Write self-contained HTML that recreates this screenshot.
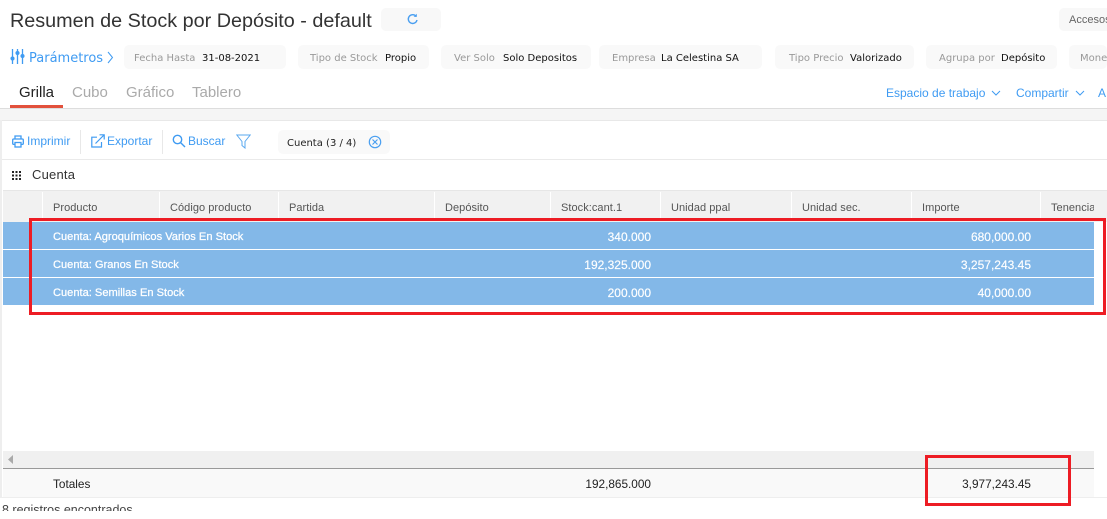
<!DOCTYPE html>
<html lang="es"><head><meta charset="utf-8"><title>Resumen de Stock</title>
<style>
html,body{margin:0;padding:0;background:#fff;overflow:hidden}
#p{position:relative;width:1107px;height:519px;overflow:hidden;background:#fff;font-family:"Liberation Sans",sans-serif}
#p div,#p svg{position:absolute}
.t{white-space:nowrap}
.chip{top:45px;height:24px;background:#f9f9f9;border-radius:5px}
.cl{top:52px;font:10px/14px "DejaVu Sans",sans-serif;white-space:nowrap;color:#999}
.cv{top:52px;font:10px/14px "DejaVu Sans",sans-serif;white-space:nowrap;color:#111}
.tab{top:84px;font-size:15px;line-height:18px;color:#aaa;white-space:nowrap}
.blue{color:#3f9bf2}
.h{top:201px;font-size:11px;line-height:14px;color:#555;white-space:nowrap;letter-spacing:.05px}
.sep{top:192px;width:1px;height:29px;background:#fff}
.row{left:3px;width:1091px;height:27px;background:#83b8e8}
.w{color:#fff;font-size:12px;line-height:14px;white-space:nowrap;-webkit-text-stroke:.15px #fff}
.wb{color:#fff;line-height:14px;white-space:nowrap;font-size:11.1px;-webkit-text-stroke:.25px #fff}
.r{text-align:right}
.red{background:#ed1c24}
.tot{font-size:11.8px;line-height:14px;color:#222;top:477px}
</style></head><body><div id="p">
<div class="t" style="left:10px;top:8px;font-size:19.8px;line-height:26px;color:#333">Resumen de Stock por Depósito - default</div>
<div style="left:381px;top:8px;width:60px;height:23px;background:#f8f8f8;border-radius:5px"></div>
<svg style="left:406px;top:13px" width="13" height="13" viewBox="0 0 13 13"><path d="M10.2 3.4A4.4 4.4 0 1 0 11 7" fill="none" stroke="#4a9ff0" stroke-width="1.4"/><path d="M7.600 3.900h3.200V.8z" fill="#4a9ff0"/></svg>
<div style="left:1059px;top:8px;width:48px;height:23px;background:#f8f8f8;border-radius:5px 0 0 5px"></div>
<div class="t" style="left:1069px;top:13px;font-size:11px;line-height:14px;color:#666">Accesos</div>

<svg style="left:10px;top:48px" width="15" height="17" viewBox="0 0 15 17"><g stroke="#3f9bf2" stroke-width="1.3" fill="#3f9bf2"><path d="M2.500 1v15M7.500 1v15M12.500 1v15" fill="none"/><circle cx="2.500" cy="10.500" r="1.400"/><circle cx="7.500" cy="5" r="1.400"/><circle cx="12.500" cy="8" r="1.400"/></g></svg>
<div class="t blue" style="left:29px;top:51px;font:13px/15px 'DejaVu Sans',sans-serif">Parámetros</div>
<svg style="left:107px;top:51px" width="7" height="13" viewBox="0 0 7 13"><path d="M1 1l4.500 5.500L1 12" fill="none" stroke="#3f9bf2" stroke-width="1"/></svg>

<div class="chip" style="left:124px;width:162px"></div><div class="cl" style="left:134px">Fecha Hasta</div><div class="cv" style="left:202px">31-08-2021</div>
<div class="chip" style="left:298px;width:131px"></div><div class="cl" style="left:310px">Tipo de Stock</div><div class="cv" style="left:385px">Propio</div>
<div class="chip" style="left:441px;width:150px"></div><div class="cl" style="left:454px">Ver Solo</div><div class="cv" style="left:503px">Solo Depositos</div>
<div class="chip" style="left:599px;width:163px"></div>
<div class="cl" style="left:612px">Empresa</div><div class="cv" style="left:661px">La Celestina SA</div>
<div class="chip" style="left:775px;width:139px"></div><div class="cl" style="left:789px">Tipo Precio</div><div class="cv" style="left:850px">Valorizado</div>
<div class="chip" style="left:926px;width:131px"></div><div class="cl" style="left:939px">Agrupa por</div><div class="cv" style="left:1001px">Depósito</div>
<div class="chip" style="left:1069px;width:38px"></div><div class="cl" style="left:1080px">Mone</div>

<div class="tab" style="left:19px;color:#222">Grilla</div>
<div class="tab" style="left:72px">Cubo</div>
<div class="tab" style="left:126px">Gráfico</div>
<div class="tab" style="left:192px">Tablero</div>
<div style="left:10px;top:105px;width:53px;height:3px;background:#e2513c"></div>
<div class="t blue" style="left:886px;top:86px;font-size:12px;line-height:14px">Espacio de trabajo</div>
<svg style="left:991px;top:90px" width="10" height="7" viewBox="0 0 10 7"><path d="M1 1l4 4 4-4" fill="none" stroke="#3f9bf2"/></svg>
<div class="t blue" style="left:1016px;top:86px;font-size:12px;line-height:14px">Compartir</div>
<svg style="left:1075px;top:90px" width="10" height="7" viewBox="0 0 10 7"><path d="M1 1l4 4 4-4" fill="none" stroke="#3f9bf2"/></svg>
<div class="t blue" style="left:1098px;top:86px;font-size:12px;line-height:14px">A</div>

<div style="left:0;top:108px;width:1107px;height:1px;background:#ddd"></div>
<div style="left:0;top:109px;width:1107px;height:11px;background:#f5f5f5"></div>
<div style="left:0;top:120px;width:1107px;height:1px;background:#e8e8e8"></div>
<div style="left:0;top:120px;width:2px;height:378px;background:#eee"></div>

<svg style="left:12px;top:135px" width="12" height="13" viewBox="0 0 12 13"><g fill="none" stroke="#3f9bf2" stroke-width="1.300"><path d="M3 4V1h6v3"/><rect x=".7" y="4" width="10.600" height="5.400" rx="1"/><rect x="3" y="7.500" width="6" height="4.500" fill="#fff"/></g></svg>
<div class="t blue" style="left:27px;top:134px;font-size:12px;line-height:14px">Imprimir</div>
<div style="left:80px;top:130px;width:1px;height:24px;background:#e8e8e8"></div>
<svg style="left:91px;top:134px" width="14" height="14" viewBox="0 0 14 14"><g fill="none" stroke="#3f9bf2" stroke-width="1.200"><path d="M10.500 8v5H.8V3.200H6"/><path d="M4.500 9.500L13 1M8.500 .8H13.200V5.500"/></g></svg>
<div class="t blue" style="left:107px;top:134px;font-size:12px;line-height:14px">Exportar</div>
<div style="left:162px;top:130px;width:1px;height:24px;background:#e8e8e8"></div>
<svg style="left:172px;top:134px" width="14" height="14" viewBox="0 0 14 14"><g fill="none" stroke="#3f9bf2" stroke-width="1.400"><circle cx="5.500" cy="5.500" r="4.200"/><path d="M8.600 8.600L13 13"/></g></svg>
<div class="t blue" style="left:188px;top:134px;font-size:12px;line-height:14px">Buscar</div>
<svg style="left:236px;top:134px" width="15" height="15" viewBox="0 0 15 15"><path d="M.8 1h13.400L9 7.500V14L6 11.500V7.500z" fill="none" stroke="#5aa8ef" stroke-width="1"/></svg>
<div style="left:278px;top:130px;width:112px;height:24px;background:#f9f9f9;border-radius:5px"></div>
<div class="t" style="left:287px;top:137px;font:10px/14px 'DejaVu Sans',sans-serif;color:#222">Cuenta (3 / 4)</div>
<svg style="left:368px;top:135px" width="14" height="14" viewBox="0 0 14 14"><g fill="none" stroke="#4a9ff0" stroke-width="1.200"><circle cx="7" cy="7" r="5.700"/><path d="M4.500 4.500l5 5M9.500 4.500l-5 5"/></g></svg>
<div style="left:2px;top:159px;width:1105px;height:1px;background:#eaeaea"></div>

<svg style="left:12px;top:171px" width="9" height="9" viewBox="0 0 9 9"><g fill="#222"><rect width="2" height="2"/><rect x="3.500" width="2" height="2"/><rect x="7" width="2" height="2"/><rect y="3.500" width="2" height="2"/><rect x="3.500" y="3.500" width="2" height="2"/><rect x="7" y="3.500" width="2" height="2"/><rect y="7" width="2" height="2"/><rect x="3.500" y="7" width="2" height="2"/><rect x="7" y="7" width="2" height="2"/></g></svg>
<div class="t" style="left:32px;top:167px;font-size:13px;line-height:15px;color:#333;letter-spacing:.2px">Cuenta</div>

<div style="left:3px;top:190px;width:1104px;height:32px;background:#f1f1f1;border-top:1px solid #e6e6e6;box-sizing:border-box"></div>
<div class="sep" style="left:42px"></div><div class="sep" style="left:159px"></div><div class="sep" style="left:278px"></div><div class="sep" style="left:434px"></div><div class="sep" style="left:550px"></div><div class="sep" style="left:660px"></div><div class="sep" style="left:791px"></div><div class="sep" style="left:911px"></div><div class="sep" style="left:1040px"></div>
<div class="h" style="left:53px">Producto</div><div class="h" style="left:170px">Código producto</div><div class="h" style="left:289px">Partida</div><div class="h" style="left:445px">Depósito</div><div class="h" style="left:561px">Stock:cant.1</div><div class="h" style="left:671px">Unidad ppal</div><div class="h" style="left:802px">Unidad sec.</div><div class="h" style="left:922px">Importe</div><div class="h" style="left:1051px;width:43px;overflow:hidden">Tenencia</div>

<div class="row" style="top:222px"></div><div class="row" style="top:250px"></div><div class="row" style="top:278px"></div>
<div class="wb" style="left:53px;top:230px">Cuenta: Agroquímicos Varios En Stock</div>
<div class="wb" style="left:53px;top:258px">Cuenta: Granos En Stock</div>
<div class="wb" style="left:53px;top:286px">Cuenta: Semillas En Stock</div>
<div class="w r" style="left:551px;width:100px;top:230px">340.000</div>
<div class="w r" style="left:551px;width:100px;top:258px">192,325.000</div>
<div class="w r" style="left:551px;width:100px;top:286px">200.000</div>
<div class="w r" style="left:911px;width:120px;top:230px">680,000.00</div>
<div class="w r" style="left:911px;width:120px;top:258px">3,257,243.45</div>
<div class="w r" style="left:911px;width:120px;top:286px">40,000.00</div>

<div style="left:3px;top:451px;width:1091px;height:17px;background:#f0f0f0"></div>
<svg style="left:8px;top:455px" width="6" height="9" viewBox="0 0 6 9"><path d="M5 0v9L0 4.500z" fill="#aaa"/></svg>
<div style="left:3px;top:468px;width:1091px;height:1px;background:#999"></div>
<div style="left:3px;top:469px;width:1091px;height:28px;background:#f9f9f9"></div>
<div style="left:2px;top:497px;width:1105px;height:1px;background:#eee"></div>
<div class="t tot" style="left:53px">Totales</div>
<div class="t r tot" style="left:551px;width:100px">192,865.000</div>
<div class="t r tot" style="left:911px;width:120px">3,977,243.45</div>
<div style="left:0;top:499px;width:300px;height:12px;overflow:hidden"><div class="t" style="left:2px;top:4px;font-size:12.500px;line-height:14px;color:#444">8 registros encontrados</div></div>

<div class="red" style="left:29px;top:218px;width:1077px;height:3px"></div>
<div class="red" style="left:29px;top:312px;width:1077px;height:3px"></div>
<div class="red" style="left:29px;top:218px;width:3px;height:97px"></div>
<div class="red" style="left:1103px;top:218px;width:3px;height:97px"></div>
<div class="red" style="left:925px;top:455px;width:146px;height:3px"></div>
<div class="red" style="left:925px;top:503px;width:146px;height:3px"></div>
<div class="red" style="left:925px;top:455px;width:3px;height:51px"></div>
<div class="red" style="left:1068px;top:455px;width:3px;height:51px"></div>
</div></body></html>
